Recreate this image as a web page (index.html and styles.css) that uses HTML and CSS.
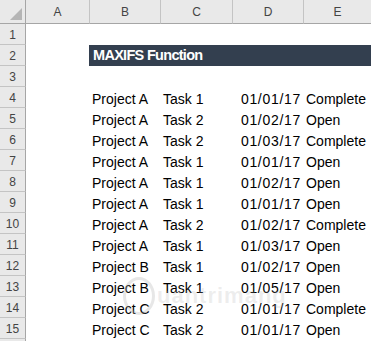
FILE: index.html
```html
<!DOCTYPE html>
<html lang="en">
<head>
  <meta charset="UTF-8" />
  <meta name="viewport" content="width=device-width, initial-scale=1.0"/>
  <title>MAXIFS Function</title>
  <link rel="stylesheet" href="styles.css">
</head>
<body>
  <div class="sheet">
    <div class="row head">
      <div class="corner"><span class="tri"></span></div>
      <div class="ch">A</div>
      <div class="ch">B</div>
      <div class="ch">C</div>
      <div class="ch">D</div>
      <div class="ch last">E</div>
    </div>

    <div class="row"><div class="rh">1</div></div>
    <div class="row"><div class="rh">2</div><div></div><div class="title">MAXIFS Function</div></div>
    <div class="row"><div class="rh">3</div></div>

    <div class="row"><div class="rh">4</div><div></div><div class="c">Project A</div><div class="c">Task 1</div><div class="c date">01/01/17</div><div class="c">Complete</div></div>
    <div class="row"><div class="rh">5</div><div></div><div class="c">Project A</div><div class="c">Task 2</div><div class="c date">01/02/17</div><div class="c">Open</div></div>
    <div class="row"><div class="rh">6</div><div></div><div class="c">Project A</div><div class="c">Task 2</div><div class="c date">01/03/17</div><div class="c">Complete</div></div>
    <div class="row"><div class="rh">7</div><div></div><div class="c">Project A</div><div class="c">Task 1</div><div class="c date">01/01/17</div><div class="c">Open</div></div>
    <div class="row"><div class="rh">8</div><div></div><div class="c">Project A</div><div class="c">Task 1</div><div class="c date">01/02/17</div><div class="c">Open</div></div>
    <div class="row"><div class="rh">9</div><div></div><div class="c">Project A</div><div class="c">Task 1</div><div class="c date">01/01/17</div><div class="c">Open</div></div>
    <div class="row"><div class="rh">10</div><div></div><div class="c">Project A</div><div class="c">Task 2</div><div class="c date">01/02/17</div><div class="c">Complete</div></div>
    <div class="row"><div class="rh">11</div><div></div><div class="c">Project A</div><div class="c">Task 1</div><div class="c date">01/03/17</div><div class="c">Open</div></div>
    <div class="row"><div class="rh">12</div><div></div><div class="c">Project B</div><div class="c">Task 1</div><div class="c date">01/02/17</div><div class="c">Open</div></div>
    <div class="row"><div class="rh">13</div><div></div><div class="c">Project B</div><div class="c">Task 1</div><div class="c date">01/05/17</div><div class="c">Open</div></div>
    <div class="row"><div class="rh">14</div><div></div><div class="c">Project C</div><div class="c">Task 2</div><div class="c date">01/01/17</div><div class="c">Complete</div></div>
    <div class="row"><div class="rh">15</div><div></div><div class="c">Project C</div><div class="c">Task 2</div><div class="c date">01/01/17</div><div class="c">Open</div></div>
    <div class="row"><div class="rh"></div></div>

    <!-- faint site mark over the data -->
    <div class="mark">
      <span class="ring"></span>
      <span class="mark-text">uantrimang</span>
    </div>
  </div>
</body>
</html>
```

FILE: styles.css
```css
body {
  margin: 0;
  background: #fff;
  overflow: hidden;
  font-family: "Liberation Sans", Arial, sans-serif;
}
.sheet {
  position: relative;
  width: 371px;
  height: 341px;
  overflow: hidden;
}
.row {
  display: grid;
  grid-template-columns: 26px 64px 71px 72px 71px 1fr;
  height: 21px;
}
.row.head {
  height: 24px;
}

/* column headers */
.corner, .ch {
  background: #e9e9e9;
  border-bottom: 1px solid #a6a6a6;
  box-sizing: border-box;
}
.corner {
  position: relative;
  border-right: 1px solid #a6a6a6;
}
.tri {
  position: absolute;
  right: 3px;
  bottom: 3px;
  width: 0;
  height: 0;
  border-left: 12px solid transparent;
  border-bottom: 12px solid #b5b5b5;
}
.ch {
  display: flex;
  align-items: center;
  justify-content: center;
  font-size: 12px;
  color: #444;
  border-right: 1px solid #c4c4c4;
  padding-top: 1px;
}
.ch.last {
  border-right: none;
}

/* row numbers */
.rh {
  display: flex;
  align-items: center;
  justify-content: center;
  background: #e9e9e9;
  border-right: 1px solid #a6a6a6;
  border-bottom: 1px solid #c4c4c4;
  box-sizing: border-box;
  font-size: 12px;
  color: #444;
  padding-top: 1px;
}

/* cells */
.c {
  display: flex;
  align-items: flex-end;
  padding: 0 2px 1px 2px;
  font-size: 14px;
  line-height: 16px;
  color: #000;
  white-space: nowrap;
}
.c.date {
  justify-content: flex-end;
  padding-right: 3px;
  letter-spacing: 0.7px;
}
.title {
  grid-column: 3 / 7;
  display: flex;
  align-items: flex-end;
  margin-left: -1px;
  padding: 0 0 3px 4px;
  background: #333f4f;
  color: #fff;
  font-weight: bold;
  font-size: 14.5px;
  letter-spacing: -0.7px;
  line-height: 16px;
}

.mark {
  position: absolute;
  left: 123px;
  top: 277px;
  display: flex;
  align-items: center;
  pointer-events: none;
}
.ring {
  width: 26px;
  height: 32px;
  border: 3px solid rgba(175, 175, 175, 0.3);
  border-radius: 50%;
}
.mark-text {
  margin-left: 2px;
  font-size: 22px;
  font-weight: bold;
  color: rgba(175, 175, 175, 0.22);
  letter-spacing: 1px;
}
```
